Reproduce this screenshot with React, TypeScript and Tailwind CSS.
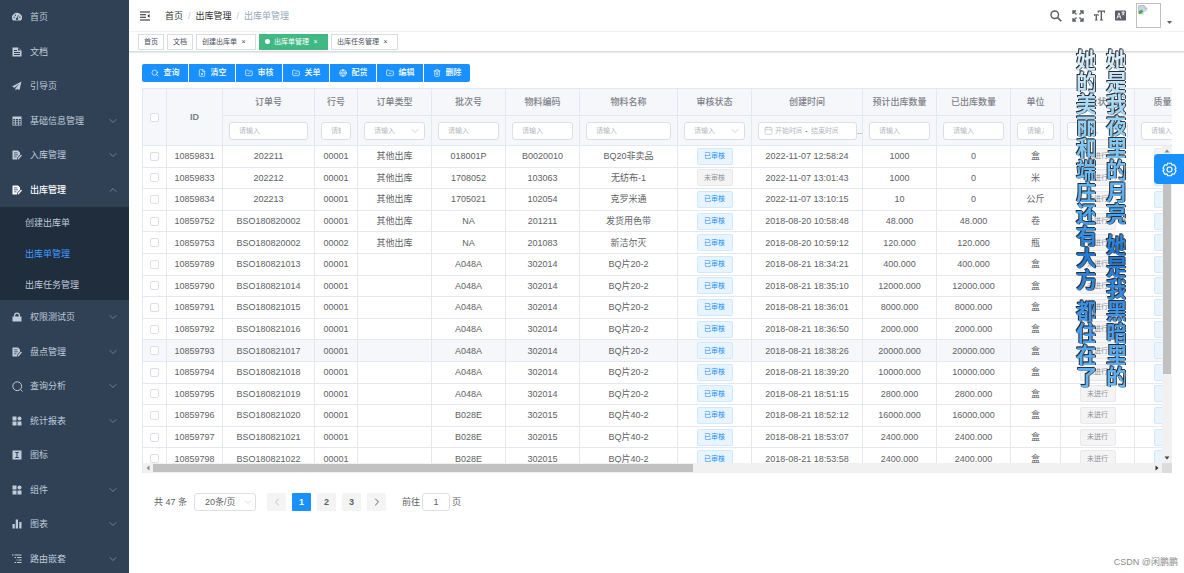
import React from "react";
import {
  ChevronDown,
  ChevronUp,
  ChevronLeft,
  ChevronRight,
  Search,
  FileX,
  FolderMinus,
  FolderCheck,
  Globe,
  Trash2,
  Calendar,
} from "lucide-react";

const glyph = "size-[10px] shrink-0 fill-current";

const DocIcon = () => (
  <svg viewBox="0 0 20 20" className={glyph}>
    <path fillRule="evenodd" d="M1 1h11l7 6v12H1zM4 6v2h6V6zm0 4v2h12v-2zm0 4v2h12v-2zM12 2v5h6z" />
  </svg>
);
const PlaneIcon = () => (
  <svg viewBox="0 0 20 20" className={glyph}>
    <path d="M19 1 0 11l5 2.500L15 5l-8 9.500V19l3.200-3.200L15 18z" />
  </svg>
);
const TableIcon = () => (
  <svg viewBox="0 0 20 20" className={glyph}>
    <path fillRule="evenodd" d="M1 1h18v18H1zM2.500 6v3h4V6zm5.500 0v3h4V6zm5.500 0v3h4V6zM2.500 10.200v3h4v-3zm5.500 0v3h4v-3zm5.500 0v3h4v-3zM2.500 14.500v3h4v-3zm5.500 0v3h4v-3zm5.500 0v3h4v-3z" />
  </svg>
);
const EditDocIcon = () => (
  <svg viewBox="0 0 20 20" className={glyph}>
    <path fillRule="evenodd" d="M1 1h11l4 4v4l-6 7v3H1zM4 5v1.500h7V5zm0 4v1.500h8V9zm0 4v1.500h5V13z" />
    <path d="m18 9 2 2-6.500 7.500-2.500.500.500-2.500z" />
  </svg>
);
const LockIcon = () => (
  <svg viewBox="0 0 20 20" className={glyph}>
    <path fillRule="evenodd" d="M1 9h3V7a6 6 0 0 1 12 0v2h3v10H1zM6.500 9h7V7a3.500 3.500 0 0 0-7 0z" />
  </svg>
);
const GridIcon = () => (
  <svg viewBox="0 0 20 20" className={glyph}>
    <path d="M1 1h8v8H1zM1 11h8v8H1zM11 11h8v8h-8z" />
    <circle cx="15" cy="5" r="4" />
  </svg>
);
const InfoBoxIcon = () => (
  <svg viewBox="0 0 20 20" className={glyph}>
    <path fillRule="evenodd" d="M1 1h18v18H1zM6.500 4v2H9v8H6.500v2h7v-2H11V6h2.500V4z" />
  </svg>
);
const BarsIcon = () => (
  <svg viewBox="0 0 20 20" className={glyph}>
    <path d="M1 10h4.500v9H1zM7.500 1H12v18H7.500zM14.500 6H19v13h-4.500z" />
  </svg>
);
const TreeIcon = () => (
  <svg viewBox="0 0 20 20" className={glyph}>
    <path d="M0 1h3v2H0zM5 1h14v2H5zM5 6h3v2H5zM10 6h9v2h-9zM9 11h2v2H9zM13 11h6v2h-6zM5 16h3v2H5zM10 16h9v2h-9z" />
  </svg>
);
const GaugeIcon = () => (
  <svg viewBox="0 0 20 20" className={glyph}>
    <path fillRule="evenodd" d="M2 17a10 9.500 0 1 1 16 0zM3 10.500a1.300 1.300 0 1 0 2.600 0 1.300 1.300 0 0 0-2.600 0zM5.500 6.500a1.300 1.300 0 1 0 2.600 0 1.300 1.300 0 0 0-2.600 0zM14.400 10.500a1.300 1.300 0 1 0 2.600 0 1.300 1.300 0 0 0-2.600 0zM12.200 6l-2 5.300a2.300 2.300 0 1 0 1.300.5l2-5.300z" />
  </svg>
);
const SearchIcon = () => (
  <svg viewBox="0 0 20 20" className="size-[11px] shrink-0 fill-none stroke-current stroke-[1.800px]">
    <circle cx="9.500" cy="9.500" r="8" />
    <path d="m15.500 15.500 3.500 3.500" />
  </svg>
);

type Item = { label: string; icon: () => React.ReactElement; arrow?: boolean; active?: boolean };

const topItems: Item[] = [
  { label: "首页", icon: GaugeIcon },
  { label: "文档", icon: DocIcon },
  { label: "引导页", icon: PlaneIcon },
  { label: "基础信息管理", icon: TableIcon, arrow: true },
  { label: "入库管理", icon: EditDocIcon, arrow: true },
  { label: "出库管理", icon: EditDocIcon, arrow: true, active: true },
];
const bottomItems: Item[] = [
  { label: "权限测试页", icon: LockIcon, arrow: true },
  { label: "盘点管理", icon: EditDocIcon, arrow: true },
  { label: "查询分析", icon: SearchIcon, arrow: true },
  { label: "统计报表", icon: GridIcon, arrow: true },
  { label: "图标", icon: InfoBoxIcon },
  { label: "组件", icon: GridIcon, arrow: true },
  { label: "图表", icon: BarsIcon, arrow: true },
  { label: "路由嵌套", icon: TreeIcon, arrow: true },
];

function MenuItem({ label, icon: Icon, arrow, active }: Item) {
  const Arrow = active ? ChevronUp : ChevronDown;
  return (
    <a
      href="#"
      className={`flex flex-1 items-center pr-[10px] pl-3 ${active ? "font-medium text-white" : "text-[#bfcbd9]"}`}
    >
      <span className="flex w-[18px] shrink-0">
        <Icon />
      </span>
      <span className="flex-1">{label}</span>
      {arrow && <Arrow className="size-[12px] text-[#8b939f]" strokeWidth={1.5} />}
    </a>
  );
}

function Sidebar() {
  return (
    <nav className="flex w-[129px] shrink-0 flex-col bg-[#304156]">
      <div className="flex h-[207px] shrink-0 flex-col">
        {topItems.map((i) => (
          <MenuItem key={i.label} {...i} />
        ))}
      </div>
      <div className="flex shrink-0 flex-col bg-[#1f2d3d] text-[#bfcbd9]">
        <a href="#" className="flex h-[31px] items-center pl-[25px]">创建出库单</a>
        <a href="#" className="flex h-[31px] items-center pl-[25px] text-[#409eff]">出库单管理</a>
        <a href="#" className="flex h-[31px] items-center pl-[25px]">出库任务管理</a>
      </div>
      <div className="flex h-[276px] shrink-0 flex-col">
        {bottomItems.map((i) => (
          <MenuItem key={i.label} {...i} />
        ))}
      </div>
    </nav>
  );
}

function Navbar() {
  return (
    <header className="flex h-[31px] shrink-0 items-center pl-[11px]">
      <button aria-label="折叠菜单" className="mr-[15px]">
        <svg viewBox="0 0 20 20" className="size-[10px] fill-[#222]">
          <path d="M0 1h20v2H0zM0 6.300h12v2H0zM0 11.300h12v2H0zM0 17h20v2H0zM19 6v7.500l-4.500-3.700z" />
        </svg>
      </button>
      <div className="flex flex-1 gap-[5px] text-[#303133]">
        <a href="#">首页</a>
        <span className="text-[#c0c4cc]">/</span>
        <a href="#">出库管理</a>
        <span className="text-[#c0c4cc]">/</span>
        <span className="text-[#97a8be]">出库单管理</span>
      </div>
      <div className="flex items-center gap-[10px] text-[#5a5e66]">
        <button aria-label="搜索">
          <svg viewBox="0 0 24 24" className="size-[12px] fill-none stroke-current">
            <circle cx="9.500" cy="9.500" r="7.500" strokeWidth="2.800" />
            <path d="m15 15 7.500 7.500" strokeWidth="3.500" />
          </svg>
        </button>
        <button aria-label="全屏">
          <svg viewBox="0 0 24 24" className="size-[12px] fill-none stroke-current stroke-[2.800px]">
            <path d="M2 8V2h6M2 2l7 7M16 2h6v6M22 2l-7 7M2 16v6h6M2 22l7-7M22 16v6h-6M22 22l-7-7" />
          </svg>
        </button>
        <button aria-label="字号">
          <svg viewBox="0 0 24 24" className="size-[11px] fill-current">
            <path d="M8 1h16v5h-2.500V4h-4v16.500H20V23h-7v-2.500h1.500V4H10.500v2H8zM0 9h10v4H8v-1.500H6.500v9H8V23H2v-2.500h1.500v-9H2V13H0z" />
          </svg>
        </button>
        <button aria-label="语言">
          <svg viewBox="0 0 24 24" className="size-[11px]">
            <rect y="1" width="24" height="22" rx="2" className="fill-current" />
            <path d="m4 19 4.500-13L13 19M5.500 15h6M14 5h7M17.500 3v2M15 11c3-1 4-3 5-6M15.500 7c1 2 3 3 5 4" className="fill-none stroke-white stroke-[1.800px]" />
          </svg>
        </button>
        <div className="flex items-end gap-[6px] pr-[12px]">
          <div role="img" aria-label="头像" className="size-[25px] border border-[#c0c0c0] p-px">
            <svg viewBox="0 0 16 16" className="size-[10px]">
              <path d="M1 1h9l4 4v9H1z" fill="#c5d9f5" stroke="#9a9a9a" />
              <path d="M10 1v4h4" fill="#fff" stroke="#9a9a9a" />
              <path d="M1.500 14v-4l4-3 3 3-4 4z" fill="#4caf36" />
              <path d="m7 15 8-8v8z" fill="#fff" />
            </svg>
          </div>
          <button aria-label="用户菜单" className="pb-[4px]">
            <svg viewBox="0 0 10 6" className="h-[3px] w-[5px] fill-[#5a5e66]">
              <path d="M0 0h10L5 6z" />
            </svg>
          </button>
        </div>
      </div>
    </header>
  );
}

const tabs = [
  { label: "首页" },
  { label: "文档" },
  { label: "创建出库单", close: true },
  { label: "出库单管理", close: true, active: true },
  { label: "出库任务管理", close: true },
];

function Tabs() {
  return (
    <div className="flex h-[21px] shrink-0 items-center gap-[3px] border-t border-b border-t-[#f0f1f3] border-b-[#d8dce5] pl-[9px] text-[7px] shadow-[0_1px_1px_rgba(0,0,0,0.08)]">
      {tabs.map((t) => (
        <a
          key={t.label}
          href="#"
          className={`flex h-[16px] items-center border px-[5px] ${
            t.active ? "border-[#42b983] bg-[#42b983] text-white" : "border-[#d8dce5] bg-white text-[#495060]"
          }`}
        >
          {t.active && <span className="mr-[4px] size-[5px] rounded-full bg-white" />}
          {t.label}
          {t.close && <span className="w-[13px] text-center">×</span>}
        </a>
      ))}
    </div>
  );
}

const actions = [
  { label: "查询", icon: Search },
  { label: "清空", icon: FileX },
  { label: "审核", icon: FolderCheck },
  { label: "关单", icon: FolderMinus },
  { label: "配货", icon: Globe },
  { label: "编辑", icon: FolderMinus },
  { label: "删除", icon: Trash2 },
];

type Col = { title: string; width: string; kind: "text" | "select" | "date" };
const cols: Col[] = [
  { title: "订单号", width: "w-[92px]", kind: "text" },
  { title: "行号", width: "w-[43px]", kind: "text" },
  { title: "订单类型", width: "w-[74px]", kind: "select" },
  { title: "批次号", width: "w-[74px]", kind: "text" },
  { title: "物料编码", width: "w-[74px]", kind: "text" },
  { title: "物料名称", width: "w-[98px]", kind: "text" },
  { title: "审核状态", width: "w-[74px]", kind: "select" },
  { title: "创建时间", width: "w-[111px]", kind: "date" },
  { title: "预计出库数量", width: "w-[74px]", kind: "text" },
  { title: "已出库数量", width: "w-[74px]", kind: "text" },
  { title: "单位", width: "w-[50px]", kind: "text" },
  { title: "作业状态", width: "w-[74px]", kind: "select" },
  { title: "质量状态", width: "w-[74px]", kind: "text" },
];

const rows: string[][] = [
  ["10859831", "202211", "00001", "其他出库", "018001P", "B0020010", "BQ20非卖品", "已审核", "2022-11-07 12:58:24", "1000", "0", "盒"],
  ["10859833", "202212", "00001", "其他出库", "1708052", "103063", "无纺布-1", "未审核", "2022-11-07 13:01:43", "1000", "0", "米"],
  ["10859834", "202213", "00001", "其他出库", "1705021", "102054", "克罗米通", "已审核", "2022-11-07 13:10:15", "10", "0", "公斤"],
  ["10859752", "BSO180820002", "00001", "其他出库", "NA", "201211", "发货用色带", "已审核", "2018-08-20 10:58:48", "48.000", "48.000", "卷"],
  ["10859753", "BSO180820002", "00002", "其他出库", "NA", "201083", "新洁尔灭", "已审核", "2018-08-20 10:59:12", "120.000", "120.000", "瓶"],
  ["10859789", "BSO180821013", "00001", "", "A048A", "302014", "BQ片20-2", "已审核", "2018-08-21 18:34:21", "400.000", "400.000", "盒"],
  ["10859790", "BSO180821014", "00001", "", "A048A", "302014", "BQ片20-2", "已审核", "2018-08-21 18:35:10", "12000.000", "12000.000", "盒"],
  ["10859791", "BSO180821015", "00001", "", "A048A", "302014", "BQ片20-2", "已审核", "2018-08-21 18:36:01", "8000.000", "8000.000", "盒"],
  ["10859792", "BSO180821016", "00001", "", "A048A", "302014", "BQ片20-2", "已审核", "2018-08-21 18:36:50", "2000.000", "2000.000", "盒"],
  ["10859793", "BSO180821017", "00001", "", "A048A", "302014", "BQ片20-2", "已审核", "2018-08-21 18:38:26", "20000.000", "20000.000", "盒"],
  ["10859794", "BSO180821018", "00001", "", "A048A", "302014", "BQ片20-2", "已审核", "2018-08-21 18:39:20", "10000.000", "10000.000", "盒"],
  ["10859795", "BSO180821019", "00001", "", "A048A", "302014", "BQ片20-2", "已审核", "2018-08-21 18:51:15", "2800.000", "2800.000", "盒"],
  ["10859796", "BSO180821020", "00001", "", "B028E", "302015", "BQ片40-2", "已审核", "2018-08-21 18:52:12", "16000.000", "16000.000", "盒"],
  ["10859797", "BSO180821021", "00001", "", "B028E", "302015", "BQ片40-2", "已审核", "2018-08-21 18:53:07", "2400.000", "2400.000", "盒"],
  ["10859798", "BSO180821022", "00001", "", "B028E", "302015", "BQ片40-2", "已审核", "2018-08-21 18:53:58", "2400.000", "2400.000", "盒"],
];

const cell = "border-r border-b border-[#e4e9f1] p-0";
const field = "h-[18px] rounded-[3px] border border-[#dcdfe6] bg-white text-[7px]";

function Cols() {
  return (
    <colgroup>
      <col className="w-[24px]" />
      <col className="w-[56px]" />
      {cols.map((c) => (
        <col key={c.title} className={c.width} />
      ))}
    </colgroup>
  );
}

function Check({ label }: { label: string }) {
  return (
    <input
      type="checkbox"
      aria-label={label}
      className="mx-auto block size-[9px] appearance-none rounded-[2px] border border-[#dcdfe6] bg-white checked:bg-[#1890ff]"
    />
  );
}

function Filter({ col }: { col: Col }) {
  if (col.kind === "select")
    return (
      <div className="relative">
        <select aria-label={col.title} className={`${field} block w-full appearance-none pl-[9px] text-[#b4b8c0]`}>
          <option>请输入</option>
        </select>
        <ChevronDown className="pointer-events-none absolute top-[3px] right-[4px] size-[12px] text-[#c0c4cc]" strokeWidth={1.5} />
      </div>
    );
  if (col.kind === "date")
    return (
      <div className="flex items-center">
        <div className={`${field} flex w-[99px] shrink-0 items-center pl-[5px] font-normal`}>
          <Calendar className="mr-[2px] size-[9px] shrink-0 text-[#b4b8c0]" strokeWidth={1.5} />
          <input aria-label="开始时间" placeholder="开始时间" className="w-[27px] min-w-0 placeholder:text-[#b4b8c0]" />
          <span className="w-[9px] text-center text-[#303133]">-</span>
          <input aria-label="结束时间" placeholder="结束时间" className="w-[27px] min-w-0 placeholder:text-[#b4b8c0]" />
        </div>
        <span>..</span>
      </div>
    );
  return (
    <input
      aria-label={col.title}
      placeholder="请输入"
      className={`${field} block w-full px-[9px] font-normal placeholder:text-[#b4b8c0]`}
    />
  );
}

function Tag({ kind, children }: { kind: "blue" | "gray"; children?: React.ReactNode }) {
  return (
    <span
      className={`mx-auto flex h-[17px] w-[36px] items-center justify-center rounded-[2px] border text-[7px] ${
        kind === "blue" ? "border-[#d1e9ff] bg-[#e8f4ff] text-[#1890ff]" : "border-[#e9e9eb] bg-[#f4f4f5] text-[#909399]"
      }`}
    >
      {children}
    </span>
  );
}

function DataTable() {
  return (
    <section className="mt-[6px] border-l border-[#e4e9f1]">
      <div className="overflow-hidden">
        <table className="w-[1066px] table-fixed border-separate border-spacing-0 bg-[#f5f7fa] text-[#7d8088]">
          <Cols />
          <thead>
            <tr className="h-[28px]">
              <th rowSpan={2} className={`${cell} border-t`}>
                <Check label="全选" />
              </th>
              <th rowSpan={2} className={`${cell} border-t font-bold`}>ID</th>
              {cols.map((c) => (
                <th key={c.title} className={`${cell} border-t font-medium`}>{c.title}</th>
              ))}
            </tr>
            <tr className="h-[30px]">
              {cols.map((c) => (
                <th key={c.title} className={`${cell} text-left font-normal`}>
                  <div className={c.kind === "date" ? "pl-[6px]" : "px-[6px]"}>
                    <Filter col={c} />
                  </div>
                </th>
              ))}
            </tr>
          </thead>
        </table>
      </div>
      <div className="flex">
        <div className="h-[317px] min-w-0 flex-1 overflow-hidden">
          <table className="h-[324px] w-[1066px] table-fixed border-separate border-spacing-0 text-center text-[#606266]">
            <Cols />
            <tbody>
              {rows.map((r, i) => (
                <tr key={r[0]} className={i === 9 ? "bg-[#f5f7fa]" : "bg-white"}>
                  <td className={cell}>
                    <Check label={r[0]} />
                  </td>
                  {r.map((v, j) => (
                    <td key={j} className={cell}>
                      {j === 7 ? <Tag kind={v === "已审核" ? "blue" : "gray"}>{v}</Tag> : v}
                    </td>
                  ))}
                  <td className={cell}>
                    <Tag kind="gray">未进行</Tag>
                  </td>
                  <td className={cell}>
                    <Tag kind={i === 0 ? "gray" : "blue"} />
                  </td>
                </tr>
              ))}
            </tbody>
          </table>
        </div>
        <div className="flex w-[10px] shrink-0 flex-col items-center bg-[#f1f1f1]">
          <svg viewBox="0 0 10 10" className="size-[10px] fill-[#8a8a8a]">
            <path d="M5 3.500 7.500 6.500h-5z" />
          </svg>
          <div className="mb-auto h-[218px] w-[8px] bg-[#c1c1c1]" />
          <svg viewBox="0 0 10 10" className="size-[10px] fill-[#404040]">
            <path d="M5 6.500 7.500 3.500h-5z" />
          </svg>
        </div>
      </div>
      <div className="flex h-[10px] items-center bg-[#f1f1f1]">
        <svg viewBox="0 0 10 10" className="size-[10px] fill-[#8a8a8a]">
          <path d="M3.500 5 6.500 2.500v5z" />
        </svg>
        <div className="h-[8px] w-[540px] bg-[#c1c1c1]" />
        <svg viewBox="0 0 10 10" className="ml-auto size-[10px] fill-[#303030]">
          <path d="M6.500 5 3.500 2.500v5z" />
        </svg>
        <div className="size-[10px] bg-[#dcdcdc]" />
      </div>
    </section>
  );
}

function Pagination() {
  const page = "flex h-[18px] w-[19px] items-center justify-center rounded-[1px]";
  return (
    <div className="mt-[20px] flex items-center pl-[12px] text-[#606266]">
      <span>共 47 条</span>
      <div className="relative ml-[7px]">
        <select aria-label="每页条数" className="block h-[18px] w-[62px] appearance-none rounded-[3px] border border-[#dcdfe6] bg-white pl-[10px]">
          <option>20条/页</option>
        </select>
        <ChevronDown className="pointer-events-none absolute top-[4px] right-[3px] size-[10px] text-[#c0c4cc]" strokeWidth={1.5} />
      </div>
      <div className="ml-[11px] flex gap-[6px] font-bold">
        <button aria-label="上一页" className={`${page} bg-[#f4f4f5] text-[#c0c4cc]`}>
          <ChevronLeft className="size-[12px]" />
        </button>
        <button className={`${page} bg-[#1890ff] text-white`}>1</button>
        <button className={`${page} bg-[#f4f4f5]`}>2</button>
        <button className={`${page} bg-[#f4f4f5]`}>3</button>
        <button aria-label="下一页" className={`${page} bg-[#f4f4f5]`}>
          <ChevronRight className="size-[12px]" />
        </button>
      </div>
      <label className="ml-[16px] flex items-center gap-[2px]">
        前往
        <input defaultValue="1" aria-label="页码" className="h-[18px] w-[28px] rounded-[3px] border border-[#dcdfe6] text-center" />
        页
      </label>
    </div>
  );
}

function Lyrics() {
  const column =
    "flex gap-[9px] bg-clip-text text-transparent [writing-mode:vertical-rl] bg-[linear-gradient(to_bottom,#e2f2fa_0%,#8accf5_25%,#4ea6ee_48%,#1f78d4_60%,#3f94e6_78%,#68b8f6_100%)]";
  return (
    <div className="pointer-events-none absolute top-[49px] right-[59px] flex gap-[8px] text-[22px] leading-[22px] font-bold [filter:drop-shadow(-1px_-1px_0_#2a3038)_drop-shadow(1px_0_0_#3a4048)]">
      <div className={column}>
        <span>她的美丽和端庄还有大方</span>
        <span>都住在了</span>
      </div>
      <div className={column}>
        <span>她是我夜里的月亮</span>
        <span>她是我黑暗里的</span>
      </div>
    </div>
  );
}

export default function App() {
  return (
    <div className="relative flex h-screen overflow-hidden bg-white font-['Liberation_Sans','Noto_Sans_CJK_SC',sans-serif] text-[9px] leading-[12px]">
      <Sidebar />
      <div className="flex min-w-0 flex-1 flex-col">
        <Navbar />
        <Tabs />
        <main className="py-[12px] pr-[12px] pl-[13px]">
          <div className="flex gap-px text-[8px]">
            {actions.map(({ label, icon: Icon }) => (
              <button
                key={label}
                className="flex h-[18px] w-[46px] items-center justify-center gap-[5px] bg-[#1890ff] font-medium text-white first:rounded-l-[2px] last:rounded-r-[2px]"
              >
                <Icon className="size-[8px]" />
                {label}
              </button>
            ))}
          </div>
          <DataTable />
          <Pagination />
        </main>
      </div>
      <Lyrics />
      <button aria-label="设置" className="absolute top-[154px] right-0 flex h-[30px] w-[30px] items-center justify-center rounded-l-[4px] bg-[#1890ff]">
        <svg viewBox="0 0 24 24" className="size-[15px] fill-none stroke-white stroke-[1.800px]">
          <path d="M9 2h6l1 3 3.500-.5L22.500 10l-2 2 2 2-3 5.500L16 19l-1 3H9l-1-3-3.500.5L1.500 14l2-2-2-2 3-5.500L8 5z" strokeLinejoin="round" />
          <circle cx="12" cy="12" r="4" />
        </svg>
      </button>
      <div className="absolute right-[6px] bottom-[5px] text-[9px] text-[#8c8c8c]">CSDN @闲鹏鹏</div>
    </div>
  );
}
